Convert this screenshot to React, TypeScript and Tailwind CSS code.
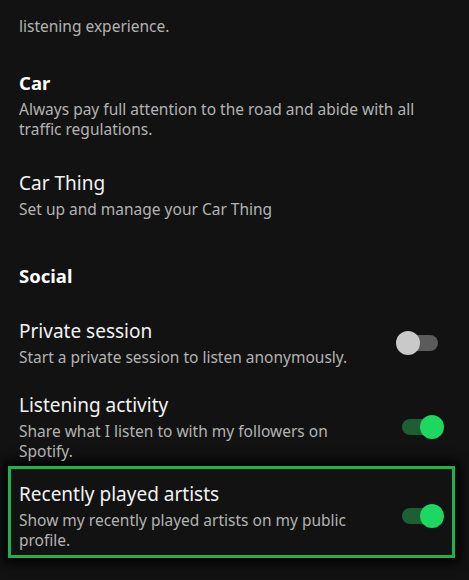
import React from "react";

function Toggle({ on }: { on: boolean }) {
  return (
    <div className="relative w-[48px] h-[24px] shrink-0">
      <div
        className={
          on
            ? "absolute left-[6px] right-[4px] top-[4px] h-[16px] rounded-full bg-[#1d5e35]"
            : "absolute left-[4px] right-[6px] top-[4px] h-[16px] rounded-full bg-[#5b5b5b]"
        }
      />
      <div
        className={
          on
            ? "absolute right-0 top-0 w-[24px] h-[24px] rounded-full bg-[#1ed760]"
            : "absolute left-0 top-0 w-[24px] h-[24px] rounded-full bg-[#c9c9c9]"
        }
      />
    </div>
  );
}

function Title({ children, bold }: { children: React.ReactNode; bold?: boolean }) {
  return (
    <div
      className={
        bold
          ? "text-[18.5px] leading-[26px] font-bold text-white"
          : "text-[19px] leading-[26px] text-[#f2f2f2]"
      }
    >
      {children}
    </div>
  );
}

function Desc({ children }: { children: React.ReactNode }) {
  return <div className="mt-[3px] text-[15.5px] leading-[20px] text-[#b3b3b3]">{children}</div>;
}

export default function App() {
  return (
    <div
      className="w-[469px] h-[580px] overflow-hidden bg-[#121212] px-[8px] pt-[16px]"
      style={{ fontFamily: '"Noto Sans", Arial, sans-serif' }}
    >
      <div className="pl-[11px] text-[15.5px] leading-[20px] text-[#b3b3b3]">listening experience.</div>

      <div className="pl-[11px] mt-[34px]">
        <Title bold>Car</Title>
        <Desc>
          Always pay full attention to the road and abide with all
          <br />
          traffic regulations.
        </Desc>
      </div>

      <div className="pl-[11px] mt-[31px]">
        <Title>Car Thing</Title>
        <Desc>Set up and manage your Car Thing</Desc>
      </div>

      <div className="pl-[11px] mt-[44px]">
        <Title bold>Social</Title>
      </div>

      <div className="pl-[11px] pr-[17px] mt-[29px] flex items-center justify-between">
        <div>
          <Title>Private session</Title>
          <Desc>Start a private session to listen anonymously.</Desc>
        </div>
        <Toggle on={false} />
      </div>

      <div className="pl-[11px] pr-[17px] mt-[25px] flex items-center justify-between">
        <div>
          <Title>Listening activity</Title>
          <Desc>
            Share what I listen to with my followers on
            <br />
            Spotify.
          </Desc>
        </div>
        <Toggle on={true} />
      </div>

      <div className="mt-[5px] w-[447px] border-[3px] border-[#22b04b] pl-[8px] pr-[8px] pt-[12px] pb-[5px] flex items-center justify-between shadow-[0_0_10px_5px_rgba(0,0,0,0.9)]">
        <div>
          <Title>Recently played artists</Title>
          <Desc>
            Show my recently played artists on my public
            <br />
            profile.
          </Desc>
        </div>
        <Toggle on={true} />
      </div>
    </div>
  );
}
